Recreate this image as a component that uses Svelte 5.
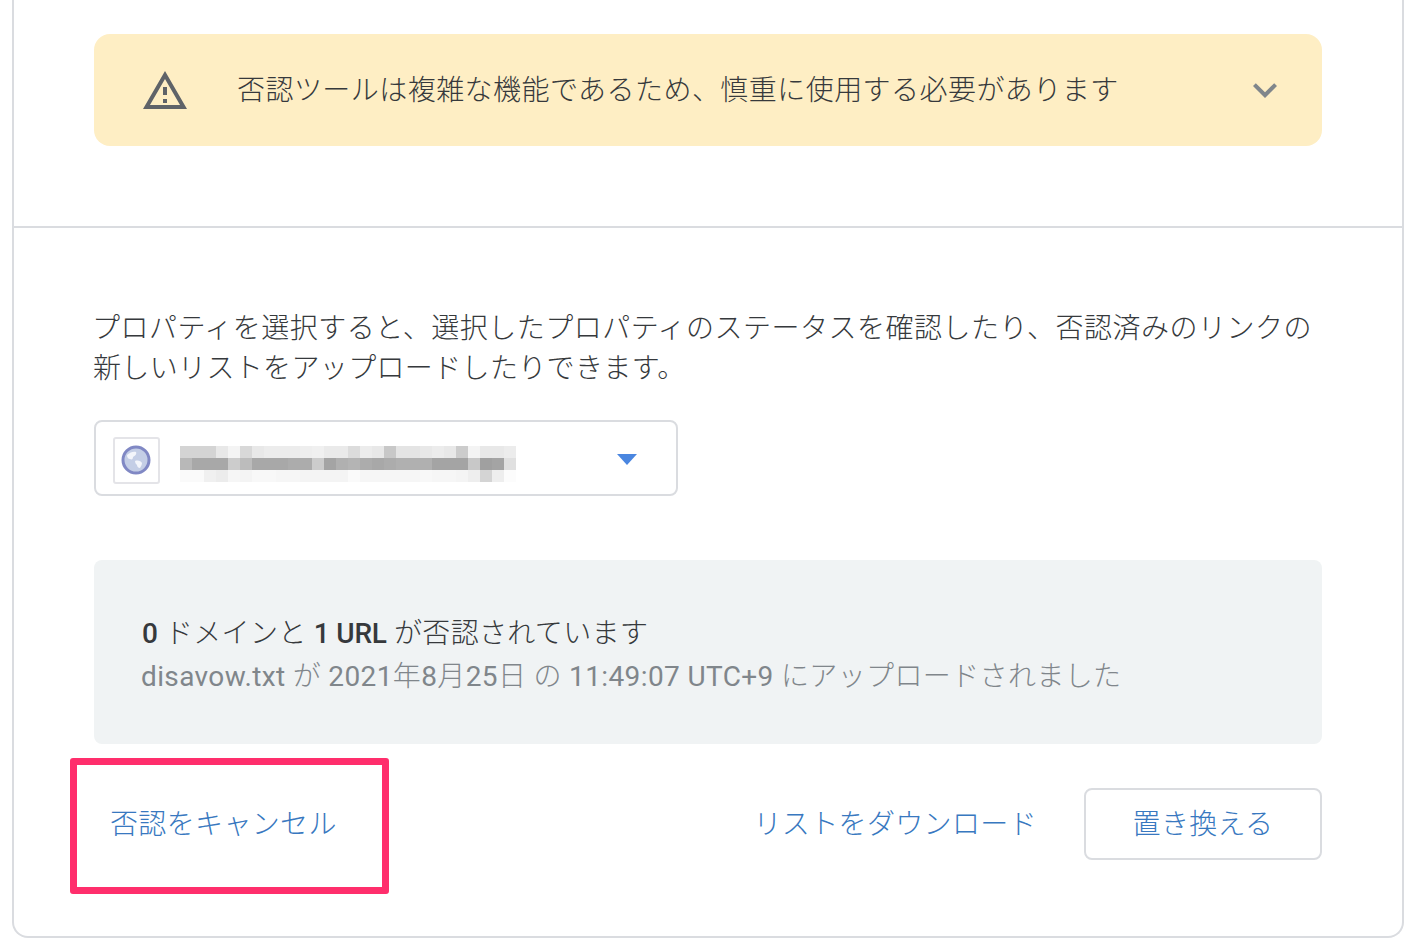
<script lang="ts">
    // grey levels of the pixelated site name, one row per list
    const rows = [
        "d4 d4 d4 e8 f4 d8 e8 ec ec ec ee f0 ea ea dc ec e8 c8 e4 e4 e8 ec e8 cc f4 e8 e8 ec",
        "b8 a8 a8 a8 cc bc a8 a8 a8 ac ac cc a4 b0 b4 ac a8 ac b0 b0 b0 a4 a4 a4 c8 a0 a4 e0",
        "fa fa f0 ec f6 f4 f8 f8 f6 f6 f4 f4 f4 f4 fa f6 f6 f6 f6 f6 f8 f6 f6 f4 ee d4 ee fc"
    ]
    const cells = rows.flatMap((row) => row.split(" ").map((v) => `#${v}${v}${v}`))
</script>

<div class="card">
    <section class="top">
        <div class="banner">
            <svg class="warn" viewBox="0 0 24 24" width="48" height="48" aria-hidden="true">
                <path d="M1 21h22L12 2 1 21zm3.47-2L12 5.99 19.53 19H4.47zM11 16h2v2h-2zm0-6h2v4h-2z" />
            </svg>
            <span class="banner-text">否認ツールは複雑な機能であるため、慎重に使用する必要があります</span>
            <svg class="chevron" viewBox="0 0 24 24" width="48" height="48" aria-hidden="true">
                <path d="M16.59 8.59L12 13.17 7.41 8.59 6 10l6 6 6-6z" />
            </svg>
        </div>
    </section>

    <section class="main">
        <p class="intro"><span class="wide">プロパティを選択すると、選択したプロパティのステータスを確認したり、否認済みのリンクの</span><br />新しいリストをアップロードしたりできます。</p>

        <div class="select">
            <div class="favicon">
                <svg viewBox="0 0 32 32" width="32" height="32" aria-hidden="true">
                    <circle cx="16" cy="16" r="13" fill="#c4cee6" stroke="#8088c4" stroke-width="3" />
                    <path d="M7 11c3-3 7-4 9-3 1 2-1 4-3 5 0 2-1 3-3 2-2 0-3-2-3-4zM15 17c3-1 6 0 7 2 0 2-1 3-2 5-2 0-3-2-3-3-1-1-2-2-2-4z" fill="#f3f5fb" />
                </svg>
            </div>
            <div class="pixels" aria-hidden="true">
                {#each cells as c}
                    <span style={`background: ${c}`}></span>
                {/each}
            </div>
            <span class="caret"></span>
        </div>

        <div class="status">
            <div class="count"><b>0</b> ドメインと <b>1 URL</b> が否認されています</div>
            <div class="upload"><i>disavow.txt</i> が <i>2021</i>年<i>8</i>月<i>25</i>日 の <i>11:49:07 UTC+9</i> にアップロードされました</div>
        </div>

        <div class="actions">
            <span class="cancel">
                否認をキャンセル
                <span class="highlight"></span>
            </span>
            <span class="download">リストをダウンロード</span>
            <button>置き換える</button>
        </div>
    </section>
</div>

<style>
    :global(body) {
        margin: 0;
        background: #fff;
    }
    .card {
        box-sizing: border-box;
        width: 1392px;
        height: 938px;
        margin-left: 12px;
        border: 2px solid #dadce0;
        border-top: none;
        border-radius: 0 0 16px 16px;
        font-family: Roboto, "Noto Sans CJK JP", sans-serif;
        font-size: 28px;
        font-weight: 300;
        letter-spacing: 0.35px;
        color: #36393c;
    }
    .top {
        box-sizing: border-box;
        height: 228px;
        padding: 34px 80px 0;
        border-bottom: 2px solid #dadce0;
    }
    .banner {
        display: flex;
        align-items: center;
        height: 112px;
        padding: 0 33px 0 47px;
        border-radius: 16px;
        background: #feeec4;
    }
    .warn {
        fill: #5f6368;
        margin-top: 2px;
    }
    .banner-text {
        margin: 0 0 4px 48px;
        flex: 1;
        letter-spacing: 0.45px;
    }
    .chevron {
        fill: #80868b;
    }
    .main {
        padding: 81px 80px 0;
    }
    .intro {
        margin: 0 0 0 -1px;
        line-height: 40px;
        white-space: nowrap;
    }
    .wide {
        margin-left: -1px;
        letter-spacing: 0.5px;
    }
    .select {
        box-sizing: border-box;
        display: flex;
        align-items: flex-start;
        width: 584px;
        height: 76px;
        margin-top: 31px;
        padding: 15px 0 0 17px;
        border: 2px solid #dadce0;
        border-radius: 8px;
    }
    .favicon {
        box-sizing: border-box;
        display: flex;
        align-items: center;
        justify-content: center;
        width: 47px;
        height: 47px;
        padding: 0 2px 2px 0;
        border: 2px solid #e4e4e8;
        border-radius: 3px;
    }
    .favicon svg {
        filter: blur(0.7px);
    }
    .pixels {
        display: grid;
        grid-template-columns: repeat(28, 12px);
        grid-auto-rows: 12px;
        margin: 9px 0 0 20px;
        filter: blur(0.6px);
    }
    .caret {
        width: 0;
        height: 0;
        margin: 17px 0 0 101px;
        border-left: 10px solid transparent;
        border-right: 10px solid transparent;
        border-top: 11px solid #4a86e0;
    }
    .status {
        box-sizing: border-box;
        height: 184px;
        margin-top: 64px;
        padding: 52px 47px 0;
        border-radius: 8px;
        background: #f0f3f4;
        line-height: 44px;
        white-space: nowrap;
    }
    .count {
        padding-left: 1px;
    }
    .status b {
        font-weight: 500;
        letter-spacing: -0.2px;
    }
    .upload {
        margin-top: -1px;
        color: #80868b;
        letter-spacing: 0.38px;
    }
    .upload i {
        font-style: normal;
        font-weight: 400;
    }
    .actions {
        display: flex;
        align-items: center;
        height: 72px;
        margin-top: 44px;
        padding-left: 16px;
        color: #3878c0;
    }
    .cancel {
        position: relative;
        margin-bottom: 4px;
    }
    .highlight {
        position: absolute;
        left: -40px;
        top: -44px;
        box-sizing: border-box;
        width: 319px;
        height: 136px;
        border: 7px solid #ff2e6c;
        border-radius: 3px;
    }
    .download {
        margin: 0 0 4px auto;
    }
    button {
        box-sizing: border-box;
        width: 238px;
        height: 72px;
        margin-left: 47px;
        padding: 0 0 4px;
        border: 2px solid #dadce0;
        border-radius: 8px;
        background: #fff;
        font: inherit;
        letter-spacing: inherit;
        color: inherit;
    }
</style>
